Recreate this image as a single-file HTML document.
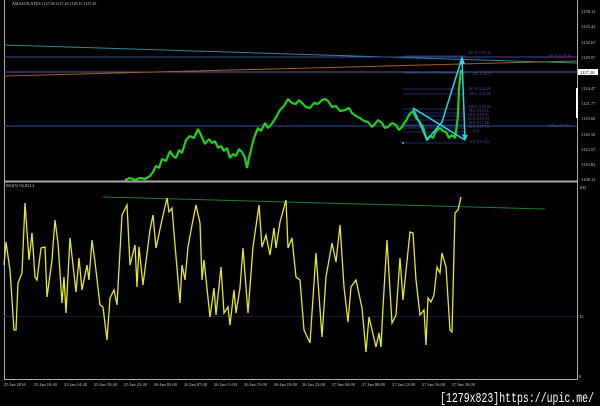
<!DOCTYPE html>
<html><head><meta charset="utf-8"><style>
html,body{margin:0;padding:0;background:#000;width:600px;height:406px;overflow:hidden}
svg{display:block}
text{font-family:"Liberation Serif",serif}
</style></head><body>
<svg width="600" height="406" viewBox="0 0 600 406" xmlns="http://www.w3.org/2000/svg">
<rect width="600" height="406" fill="#000"/>
<line x1="4.5" y1="0" x2="4.5" y2="380" stroke="#aaa" stroke-width="1"/>
<line x1="577.5" y1="0" x2="577.5" y2="380" stroke="#aaa" stroke-width="1"/>
<line x1="4" y1="181.5" x2="577" y2="181.5" stroke="#aaa" stroke-width="2"/>
<line x1="4" y1="379.5" x2="577" y2="379.5" stroke="#aaa" stroke-width="1"/>
<text x="12" y="5" font-size="4" fill="#ccc">AMAZON.NFUS   1127.00 1127.20 1129.15 1127.20</text>
<text x="6" y="187" font-size="4.5" fill="#ccc">RSI(5) 92.8214</text>
<line x1="4" y1="45" x2="577" y2="63" stroke="#2a8a9a" stroke-width="1"/>
<line x1="4" y1="57" x2="577" y2="57" stroke="#3a4a9a" stroke-width="1"/>
<line x1="4" y1="72" x2="577" y2="72" stroke="#5a5a8a" stroke-width="1"/>
<line x1="4" y1="76" x2="577" y2="61" stroke="#a0602a" stroke-width="1"/>
<line x1="4" y1="126" x2="577" y2="126" stroke="#3a4a9a" stroke-width="1"/>
<g stroke="#2a3a8a" stroke-width="0.8">
<line x1="403" y1="56" x2="465" y2="56"/><line x1="403" y1="73" x2="465" y2="73"/>
<line x1="403" y1="89" x2="465" y2="89"/><line x1="403" y1="94" x2="465" y2="94"/>
<line x1="403" y1="109" x2="465" y2="109"/><line x1="403" y1="113" x2="465" y2="113"/>
<line x1="403" y1="116" x2="465" y2="116"/><line x1="403" y1="120" x2="465" y2="120"/>
<line x1="403" y1="125" x2="465" y2="125"/><line x1="403" y1="128" x2="465" y2="128"/>
<line x1="403" y1="132" x2="465" y2="132"/><line x1="403" y1="143" x2="465" y2="143"/>
</g>
<g font-size="4" fill="#4a5ab0">
<text x="468" y="54">261.8 1129.36</text><text x="472" y="75">200 1128.11</text>
<text x="468" y="90">161.8 1124.26</text><text x="468" y="95">138.2 1122.86</text>
<text x="468" y="108">100.0 1120.60</text><text x="468" y="112">78.6 1119.95</text>
<text x="468" y="116">76.4 1119.25</text><text x="468" y="120">61.8 1118.54</text>
<text x="468" y="124">50.0 1117.86</text><text x="468" y="128">38.2 1117.16</text>
<text x="472" y="132">23.6</text><text x="470" y="143">0.0 1114.63</text>
<text x="548" y="57">161.8 1129.36</text><text x="548" y="127">138.2 1117.63</text>
</g>
<rect x="402" y="142" width="2" height="2" fill="#6a7ad0"/>
<polyline fill="none" stroke="#1fd01f" stroke-width="2.2" stroke-linejoin="bevel" points="125,180 130,178 135,180 140,178 145,179 150,176 153,172 156,166 159,168 162,159 166,161 170,151 173,156 176,158 179,150 182,153 186,140 190,136 194,138 198,129 201,135 205,144 209,139 212,143 215,141 218,148 221,146 224,151 227,148 230,158 233,154 236,156 239,149 242,152 245,158 247,168 249,158 251,150 254,138 258,128 261,131 265,123 268,128 271,125 275,119 280,110 284,106 288,99 292,103 296,104 299,100 302,103 306,107 310,108 314,103 318,104 322,100 325,99 328,101 332,107 336,106 340,111 345,110 349,108 352,113 356,116 360,118 364,121 368,122 372,127 375,124 378,120 382,123 385,128 388,127 392,123 396,125 399,130 402,127 404,123 406,121 409,115 413,111 416,118 419,121 423,127 425,134 427,140 430,136 433,138 436,131 440,128 443,131 446,132 449,138 452,135 455,138 456,132 458,115 459,88 461,70"/>
<g stroke="#2ad4e8" stroke-width="1.5" fill="none">
<polyline points="413,108 427,140 442,122 462,58"/>
<line x1="413" y1="108" x2="465" y2="140"/>
<line x1="462" y1="58" x2="465" y2="140"/>
</g>
<polygon points="462,56 459,64 465,64" fill="#2ad4e8"/>
<polygon points="465,141 462,134 468,135" fill="#2ad4e8"/>
<g font-size="4.5" fill="#ccc">
<text x="581" y="13">1138.12</text><text x="581" y="28">1135.42</text><text x="581" y="44">1132.67</text>
<text x="581" y="59">1129.97</text><text x="581" y="90">1124.47</text><text x="581" y="105">1121.77</text>
<text x="581" y="120">1119.02</text><text x="581" y="136">1116.32</text><text x="581" y="151">1113.57</text>
<text x="581" y="166">1110.82</text><text x="581" y="181">1108.12</text>
<text x="579" y="189">100</text><text x="579" y="318">32</text><text x="579" y="378">0</text>
</g>
<rect x="578" y="69" width="20" height="6" fill="#fff"/>
<text x="580" y="74" font-size="4.5" fill="#000">1127.20</text>
<line x1="577" y1="88" x2="577" y2="118" stroke="#fff" stroke-width="2"/>
<line x1="4" y1="316.5" x2="577" y2="316.5" stroke="#1a1a30" stroke-width="1"/>
<line x1="103" y1="197" x2="545" y2="209" stroke="#1f7a2f" stroke-width="1"/>
<polyline fill="none" stroke="#e8e820" stroke-width="1.3" points="4,265 6,242 10,270 14,330 16,330 18,283 22,273 25,203 29,260 32,233 35,277 37,280 41,248 45,247 47,297 52,260 55,220 58,243 62,303 64,277 66,313 70,238 76,292 79,258 82,290 87,265 89,280 92,240 95,262 100,305 103,307 107,340 110,298 114,290 117,305 122,215 127,205 130,265 135,245 137,287 139,247 143,285 150,230 153,215 156,248 162,220 167,198 169,212 172,208 175,245 180,303 182,265 185,280 188,247 192,225 196,205 200,223 202,280 204,260 210,317 214,288 216,315 221,267 224,313 228,307 230,325 234,290 236,313 240,288 243,248 248,313 253,247 259,205 262,247 266,235 270,255 274,228 276,248 280,222 286,200 288,248 292,238 296,277 300,280 304,330 310,343 316,253 322,337 326,277 332,243 336,262 340,225 344,287 348,322 351,287 356,280 362,308 366,352 369,317 376,347 379,333 381,347 383,307 387,240 392,323 396,315 400,258 403,300 410,232 413,233 416,280 420,315 424,310 426,345 428,298 431,302 434,295 437,267 440,273 442,253 446,267 450,330 452,332 455,213 458,210 461,197"/>
<g font-size="4.5" fill="#ccc">
<text x="4" y="386">25 Jan 2016</text><text x="34" y="386">25 Jan 10:40</text><text x="64" y="386">25 Jan 14:40</text>
<text x="94" y="386">25 Jan 18:40</text><text x="124" y="386">25 Jan 22:40</text><text x="154" y="386">26 Jan 03:00</text>
<text x="184" y="386">26 Jan 07:00</text><text x="214" y="386">26 Jan 11:00</text><text x="244" y="386">26 Jan 15:00</text>
<text x="274" y="386">26 Jan 19:00</text><text x="302" y="386">26 Jan 23:00</text><text x="332" y="386">27 Jan 04:00</text>
<text x="362" y="386">27 Jan 08:00</text><text x="392" y="386">27 Jan 12:00</text><text x="422" y="386">27 Jan 16:00</text>
<text x="452" y="386">27 Jan 20:00</text>
</g>
<text x="440" y="402" font-size="14" fill="#fff" style="font-family:'Liberation Mono',monospace" textLength="154" lengthAdjust="spacingAndGlyphs">[1279x823]https://upic.me/</text>
</svg>
</body></html>
